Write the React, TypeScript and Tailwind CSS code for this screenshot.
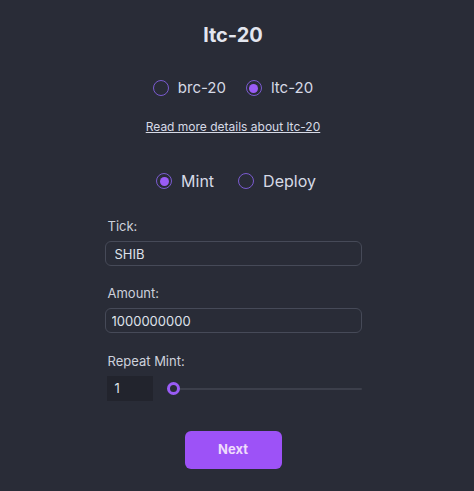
import React, { useState } from 'react';

function Radio({ checked, label, onClick }: { checked: boolean; label: string; onClick: () => void }) {
  return (
    <button onClick={onClick} className="flex items-center gap-[9px] h-[20px] text-[#d6dae6]">
      <span className="w-[16px] h-[16px] rounded-full border-[1.5px] border-[#7a5bd0] flex items-center justify-center">
        {checked && <span className="w-[9px] h-[9px] rounded-full bg-[#9a5cf6]" />}
      </span>
      {label}
    </button>
  );
}

export default function App() {
  const [proto, setProto] = useState('ltc-20');
  const [mode, setMode] = useState('mint');

  return (
    <div className="w-[474px] h-[491px] bg-[#292c37] font-['Inter',sans-serif] text-[#d6dae6] flex flex-col items-center pr-[8px]">
      <h1 className="mt-[23px] text-[20px] font-bold text-[#e3e6ef] leading-[24px]">ltc-20</h1>

      <div className="mt-[31px] flex items-center gap-[20px] text-[15px]">
        <Radio checked={proto === 'brc-20'} label="brc-20" onClick={() => setProto('brc-20')} />
        <Radio checked={proto === 'ltc-20'} label="ltc-20" onClick={() => setProto('ltc-20')} />
      </div>

      <a href="#" className="mt-[21px] text-[12px] underline text-[#d6dae6] leading-[16px]">
        Read more details about ltc-20
      </a>

      <div className="mt-[36px] flex items-center gap-[24px] text-[16px] pl-[6px]">
        <Radio checked={mode === 'mint'} label="Mint" onClick={() => setMode('mint')} />
        <Radio checked={mode === 'deploy'} label="Deploy" onClick={() => setMode('deploy')} />
      </div>

      <div className="mt-[27px] w-[257px] flex flex-col">
        <label className="text-[13px] text-[#cdd1dc] ml-[3px] leading-[16px]">Tick:</label>
        <input
          defaultValue="SHIB"
          className="mt-[7px] h-[25px] rounded-[6px] border border-[#464a58] bg-transparent px-[9px] text-[13px] text-[#dfe2ea] outline-none"
        />

        <label className="mt-[19px] text-[13px] text-[#cdd1dc] ml-[3px] leading-[16px]">Amount:</label>
        <input
          defaultValue="1000000000"
          className="mt-[7px] h-[25px] rounded-[6px] border border-[#464a58] bg-transparent px-[6px] text-[13px] text-[#dfe2ea] outline-none"
        />

        <label className="mt-[20px] text-[13px] text-[#cdd1dc] ml-[3px] leading-[16px]">Repeat Mint:</label>
        <div className="mt-[7px] flex items-center">
          <div className="ml-[2px] w-[46px] h-[25px] bg-[#22242d] text-[13px] text-[#dfe2ea] flex items-center px-[8px]">1</div>
          <div className="ml-[14px] flex-1 relative h-[14px] flex items-center">
            <div className="w-full h-[2px] bg-[#3c3f4b] rounded" />
            <span className="absolute left-0 w-[13px] h-[13px] rounded-full border-[3px] border-[#9a5cf6] bg-[#292c37]" />
          </div>
        </div>
      </div>

      <button className="mt-[30px] w-[97px] h-[38px] rounded-[6px] bg-[#9d52f7] text-[13px] font-bold text-[#eedcfb]">
        Next
      </button>
    </div>
  );
}
